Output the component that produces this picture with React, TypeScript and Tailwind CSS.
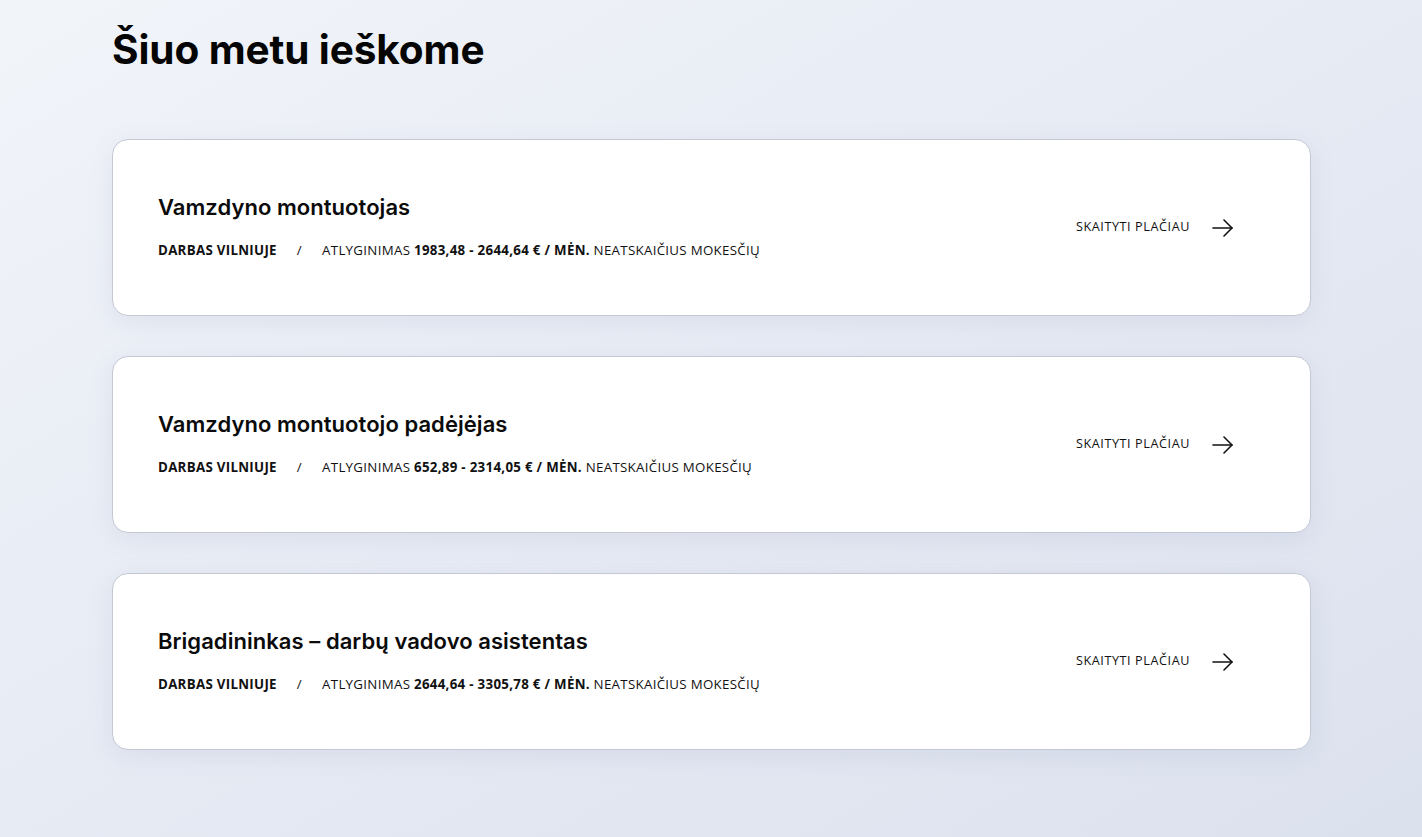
import React from "react";

type Job = {
    title: string;
    salary: string;
};

const jobs: Array<Job> = [
    {title: "Vamzdyno montuotojas", salary: "1983,48 - 2644,64 € / MĖN."},
    {title: "Vamzdyno montuotojo padėjėjas", salary: "652,89 - 2314,05 € / MĖN."},
    {title: "Brigadininkas – darbų vadovo asistentas", salary: "2644,64 - 3305,78 € / MĖN."},
];

function Arrow() {
    return (
        <svg width="21" height="20" viewBox="0 0 21 20" fill="none" stroke="#111" strokeWidth="1.6" strokeLinecap="round" strokeLinejoin="round">
            <path d="M1 10h19"/>
            <path d="M12 2l8 8-8 8"/>
        </svg>
    );
}

function JobCard({job}: {job: Job}) {
    return (
        <div className="flex items-center justify-between h-[177px] bg-white border border-[#c3c8d4] rounded-[16px] shadow-[0_6px_24px_rgba(120,130,170,0.12)] pl-[45px] pr-[77px]">
            <div className="flex flex-col pb-[4px]">
                <h2 className="text-[22px] leading-[28px] font-semibold text-[#0b0b0b] font-['Inter',sans-serif] tracking-[0.05px]">{job.title}</h2>
                <p className="mt-[20px] text-[13.3px] leading-[18px] uppercase text-[#111] font-['Open_Sans',sans-serif] tracking-[0.3px]">
                    <span className="font-bold">Darbas Vilniuje</span>
                    <span className="px-[20px]">/</span>
                    Atlyginimas <span className="font-bold">{job.salary}</span> neatskaičius mokesčių
                </p>
            </div>
            <a href="#" className="flex items-center gap-[22px] text-[12.6px] uppercase tracking-[0.6px] text-[#111] font-['Open_Sans',sans-serif]">
                Skaityti plačiau
                <Arrow/>
            </a>
        </div>
    );
}

export default function App() {
    return (
        <div className="w-full min-h-screen bg-gradient-to-br from-[#f1f4f9] to-[#dce1ee]">
            <div className="w-[1199px] ml-[112px] pt-[26px] pb-[80px]">
                <h1 className="text-[40.5px] leading-[48px] font-bold text-[#050505] font-['Inter',sans-serif] tracking-[-0.1px]">Šiuo metu ieškome</h1>
                <div className="flex flex-col gap-[40px] mt-[65px]">
                    {jobs.map((job) => <JobCard key={job.title} job={job}/>)}
                </div>
            </div>
        </div>
    );
}
